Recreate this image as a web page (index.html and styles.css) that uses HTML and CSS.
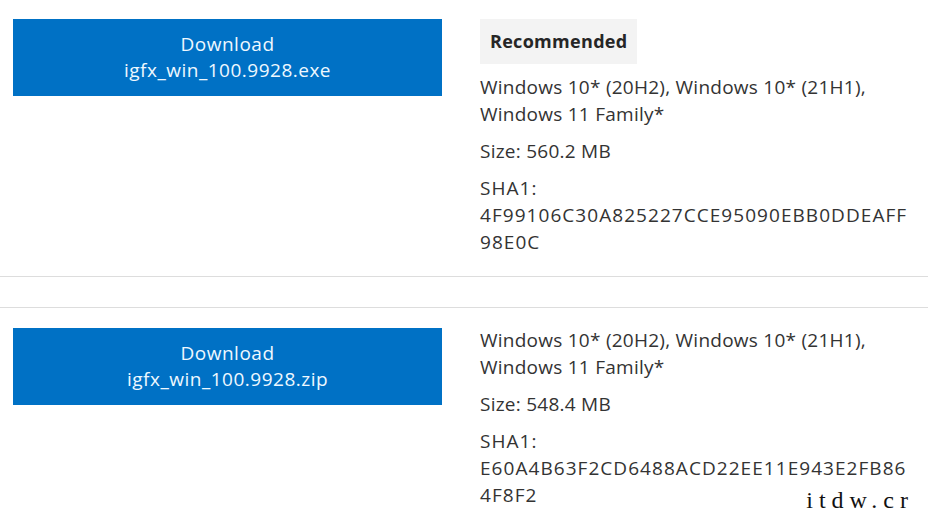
FILE: index.html
```html
<!DOCTYPE html>
<html lang="en">
<head>
    <meta charset="UTF-8">
    <meta name="viewport" content="width=device-width, initial-scale=1.0">
    <title>Intel Graphics Driver Downloads</title>
    <link rel="stylesheet" href="styles.css">
</head>
<body>
    <div class="download-row">
        <div class="download-action">
            <a class="download-btn" href="#">Download<br>igfx_win_100.9928.exe</a>
        </div>
        <div class="download-info">
            <div class="badge">Recommended</div>
            <p>Windows 10* (20H2), Windows 10* (21H1), Windows 11 Family*</p>
            <p>Size: 560.2 MB</p>
            <p class="hash">SHA1:<br>4F99106C30A825227CCE95090EBB0DDEAFF98E0C</p>
        </div>
    </div>

    <div class="spacer"></div>

    <div class="download-row">
        <div class="download-action">
            <a class="download-btn" href="#">Download<br>igfx_win_100.9928.zip</a>
        </div>
        <div class="download-info">
            <p>Windows 10* (20H2), Windows 10* (21H1), Windows 11 Family*</p>
            <p>Size: 548.4 MB</p>
            <p class="hash">SHA1:<br>E60A4B63F2CD6488ACD22EE11E943E2FB864F8F2</p>
        </div>
    </div>

    <div class="watermark">itdw.cr</div>
</body>
</html>
```

FILE: styles.css
```css
body {
    font-family: "Open Sans", Arial, sans-serif;
    margin: 0;
    background-color: white;
    color: #333;
    overflow: hidden;
}
.download-row {
    display: flex;
    padding: 19px 0 20px 13px;
    border-bottom: 1px solid #ddd;
}
.download-row:last-of-type {
    border-bottom: none;
}
.spacer {
    height: 30px;
    border-bottom: 1px solid #ddd;
}
.download-action {
    width: 429px;
    flex-shrink: 0;
    margin-right: 38px;
}
.spacer + .download-row .download-action {
    padding-top: 1px;
}
.download-btn {
    display: block;
    padding: 12px 10px 13px;
    background-color: #0071c5;
    color: #eef8ff;
    text-align: center;
    text-decoration: none;
    font-size: 19px;
    letter-spacing: 0.5px;
    line-height: 26px;
}
.download-info {
    width: 433px;
    flex-shrink: 0;
    font-size: 19px;
    letter-spacing: 0.25px;
    line-height: 27px;
}
.download-info p {
    margin: 0 0 10px 0;
}
.download-info p:last-child {
    margin-bottom: 0;
}
.badge {
    display: inline-block;
    padding: 9px 10px;
    background-color: #f3f3f3;
    color: #262626;
    font-weight: bold;
    font-size: 18px;
    letter-spacing: 0.3px;
    margin-bottom: 10px;
}
.hash {
    word-break: break-all;
    letter-spacing: 1.05px;
}
.watermark {
    position: absolute;
    right: 14px;
    top: 488px;
    white-space: nowrap;
    font-family: "Liberation Serif", serif;
    font-size: 24px;
    line-height: 24px;
    letter-spacing: 6px;
    color: #111;
}
```
